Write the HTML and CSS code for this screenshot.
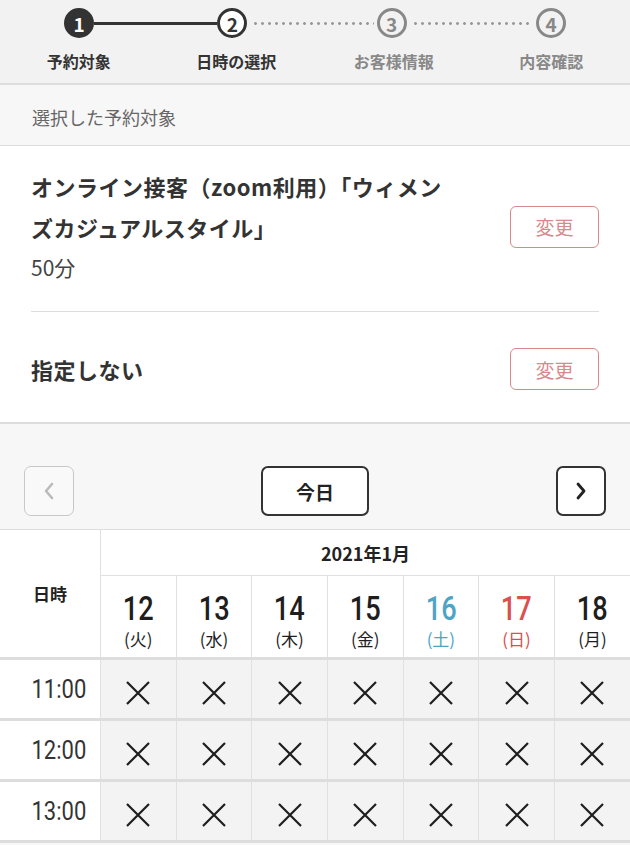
FILE: index.html
```html
<!DOCTYPE html>
<html lang="ja">
<head>
  <meta charset="UTF-8">
  <meta name="viewport" content="width=device-width, initial-scale=1.0">
  <title>日時の選択</title>
  <link rel="stylesheet" href="styles.css">
</head>
<body>
  <!-- Steps -->
  <header class="stepper">
    <div class="track">
      <span class="dot done">1</span>
      <span class="line solid"></span>
      <span class="dot current">2</span>
      <span class="line dotted"></span>
      <span class="dot todo">3</span>
      <span class="line dotted"></span>
      <span class="dot todo">4</span>
    </div>
    <ol class="step-labels">
      <li class="active">予約対象</li>
      <li class="active">日時の選択</li>
      <li>お客様情報</li>
      <li>内容確認</li>
    </ol>
  </header>

  <!-- Selected item -->
  <h2 class="section-title">選択した予約対象</h2>
  <section class="selected">
    <div class="selected-item">
      <div class="selected-text">
        <p class="item-name">オンライン接客（zoom利用）「ウィメン<br>ズカジュアルスタイル」</p>
        <p class="item-time">50分</p>
      </div>
      <button class="change-btn">変更</button>
    </div>
    <div class="selected-item staff">
      <div class="selected-text">
        <p class="item-name">指定しない</p>
      </div>
      <button class="change-btn">変更</button>
    </div>
  </section>

  <!-- Calendar nav -->
  <div class="cal-nav">
    <button class="nav-btn disabled" aria-label="前へ">
      <svg width="14" height="18" viewBox="0 0 14 18"><polyline points="10,2 4,9 10,16" fill="none" stroke="#bbb" stroke-width="2.6" stroke-linecap="round" stroke-linejoin="round"/></svg>
    </button>
    <button class="today-btn">今日</button>
    <button class="nav-btn" aria-label="次へ">
      <svg width="14" height="18" viewBox="0 0 14 18"><polyline points="4,2 10,9 4,16" fill="none" stroke="#222" stroke-width="2.8" stroke-linecap="round" stroke-linejoin="round"/></svg>
    </button>
  </div>

  <table class="calendar">
    <thead>
      <tr>
        <th rowspan="2" class="corner">日時</th>
        <th colspan="7" class="month">2021年1月</th>
      </tr>
      <tr class="days">
        <th><span class="num">12</span><span class="wd">(火)</span></th>
        <th><span class="num">13</span><span class="wd">(水)</span></th>
        <th><span class="num">14</span><span class="wd">(木)</span></th>
        <th><span class="num">15</span><span class="wd">(金)</span></th>
        <th class="sat"><span class="num">16</span><span class="wd">(土)</span></th>
        <th class="sun"><span class="num">17</span><span class="wd">(日)</span></th>
        <th><span class="num">18</span><span class="wd">(月)</span></th>
      </tr>
    </thead>
    <tbody id="slots"></tbody>
  </table>

  <script>
    // build time slots
    const times = ["11:00", "12:00", "13:00"];
    const cross = '<svg width="26" height="24" viewBox="0 0 26 24"><path d="M2 1 L24 23 M24 1 L2 23" stroke="#1e1e1e" stroke-width="2.2" fill="none"/></svg>';
    const body = document.getElementById("slots");
    times.forEach(t => {
      let row = `<tr><th class="time"><span>${t}</span></th>`;
      for (let i = 0; i < 7; i++) row += `<td class="slot">${cross}</td>`;
      body.innerHTML += row + "</tr>";
    });
  </script>
</body>
</html>
```

FILE: styles.css
```css
body {
  margin: 0;
  font-family: "Noto Sans CJK JP", "Noto Sans", sans-serif;
  color: #333;
  background: #f7f7f7;
}

p, ol, h2 {
  margin: 0;
  padding: 0;
}

button {
  font-family: inherit;
  cursor: pointer;
}

/* Steps */
.stepper {
  background: #f2f2f2;
  border-bottom: 2px solid #ddd;
}

.track {
  display: flex;
  align-items: center;
  padding: 8px 64px 0;
}

.dot {
  box-sizing: border-box;
  width: 30px;
  height: 30px;
  border-radius: 50%;
  display: flex;
  align-items: center;
  justify-content: center;
  font-size: 19px;
  font-weight: 700;
  line-height: 1;
}

.dot.done {
  background: #333;
  color: #fff;
}

.dot.current {
  background: #fff;
  border: 3px solid #333;
  color: #333;
}

.dot.todo {
  border: 3px solid #888;
  color: #888;
}

.line {
  flex: 1;
  height: 3px;
}

.line.solid {
  background: #333;
}

.line.dotted {
  margin: 0 3px;
  background-image: radial-gradient(circle, #999 1.2px, transparent 1.6px);
  background-size: 7px 3px;
  background-position: 2px 0;
}

.step-labels {
  list-style: none;
  display: grid;
  grid-template-columns: repeat(4, 1fr);
  margin-top: 12px;
  padding-bottom: 11px;
  font-size: 16px;
  font-weight: 700;
  line-height: 22px;
  text-align: center;
  color: #888;
}

.step-labels .active {
  color: #333;
}

/* Selected */
.section-title {
  padding: 22px 32px 17px;
  font-size: 18px;
  font-weight: 400;
  line-height: 21px;
  color: #666;
  border-bottom: 1px solid #ddd;
}

.selected {
  background: #fff;
  padding: 0 31px;
  border-bottom: 2px solid #ddd;
}

.selected-item {
  display: flex;
  align-items: center;
  justify-content: space-between;
  padding: 20px 0 30px;
  border-bottom: 1px solid #ddd;
}

.selected-item.staff {
  padding: 36px 0 32px;
  border-bottom: none;
}

.item-name {
  font-size: 22px;
  font-weight: 700;
  line-height: 41px;
  letter-spacing: 0.5px;
  color: #333;
}

.item-time {
  margin-top: 5px;
  font-size: 21px;
  line-height: 28px;
  color: #444;
}

.change-btn {
  flex-shrink: 0;
  width: 89px;
  height: 42px;
  background: #fff;
  border: 1.5px solid #d8878b;
  border-radius: 6px;
  color: #d68a8e;
  font-size: 19px;
}

.selected-item:first-child .change-btn {
  margin-top: 6px;
}

/* Calendar nav */
.cal-nav {
  display: flex;
  align-items: center;
  justify-content: space-between;
  padding: 42px 24px 13px;
}

.nav-btn {
  width: 50px;
  height: 50px;
  display: flex;
  align-items: center;
  justify-content: center;
  background: #fff;
  border: 2px solid #333;
  border-radius: 7px;
  padding: 0;
}

.nav-btn.disabled {
  background: #f9f9f9;
  border: 1.5px solid #c8c8c8;
}

.today-btn {
  width: 108px;
  height: 50px;
  background: #fff;
  border: 2px solid #333;
  border-radius: 7px;
  font-size: 19px;
  font-weight: 700;
  color: #222;
}

/* Calendar table */
.calendar {
  width: 100%;
  border-collapse: collapse;
  table-layout: fixed;
  background: #fff;
}

.calendar th,
.calendar td {
  border: 1px solid #e0e0e0;
  padding: 0;
}

.calendar tr > :first-child {
  border-left: none;
}

.calendar tr > :last-child {
  border-right: none;
}

.calendar .corner {
  width: 100px;
  font-size: 17px;
  font-weight: 700;
  color: #222;
  border-top: 1px solid #ddd;
}

.calendar .month {
  height: 45px;
  font-size: 18px;
  font-weight: 700;
  color: #222;
  border-top: 1px solid #ddd;
}

.days th {
  height: 65px;
  vertical-align: top;
  padding-top: 16px;
  font-weight: 400;
  color: #1e1e1e;
}

.days .num {
  display: inline-block;
  font-family: Roboto, sans-serif;
  font-size: 34px;
  font-weight: 500;
  line-height: 32px;
  transform: scaleX(0.8);
}

.days .wd {
  display: block;
  margin-top: 3px;
  font-size: 17px;
  line-height: 22px;
}

.days .sat {
  color: #4ea4c4;
}

.days .sun {
  color: #d9504e;
}

.calendar tbody th,
.calendar tbody td {
  height: 52px;
  border-top: 3px solid #ddd;
  border-bottom: 3px solid #ddd;
}

.calendar .time {
  padding-right: 14px;
  text-align: right;
  font-family: Roboto, sans-serif;
  font-size: 25px;
  font-weight: 400;
  color: #333;
}

.time span {
  display: inline-block;
  transform: scaleX(0.88);
  transform-origin: right center;
}

.calendar .slot {
  background: #f3f3f3;
  text-align: center;
  padding-top: 6px;
}

.slot svg {
  display: inline-block;
  vertical-align: middle;
}
```
